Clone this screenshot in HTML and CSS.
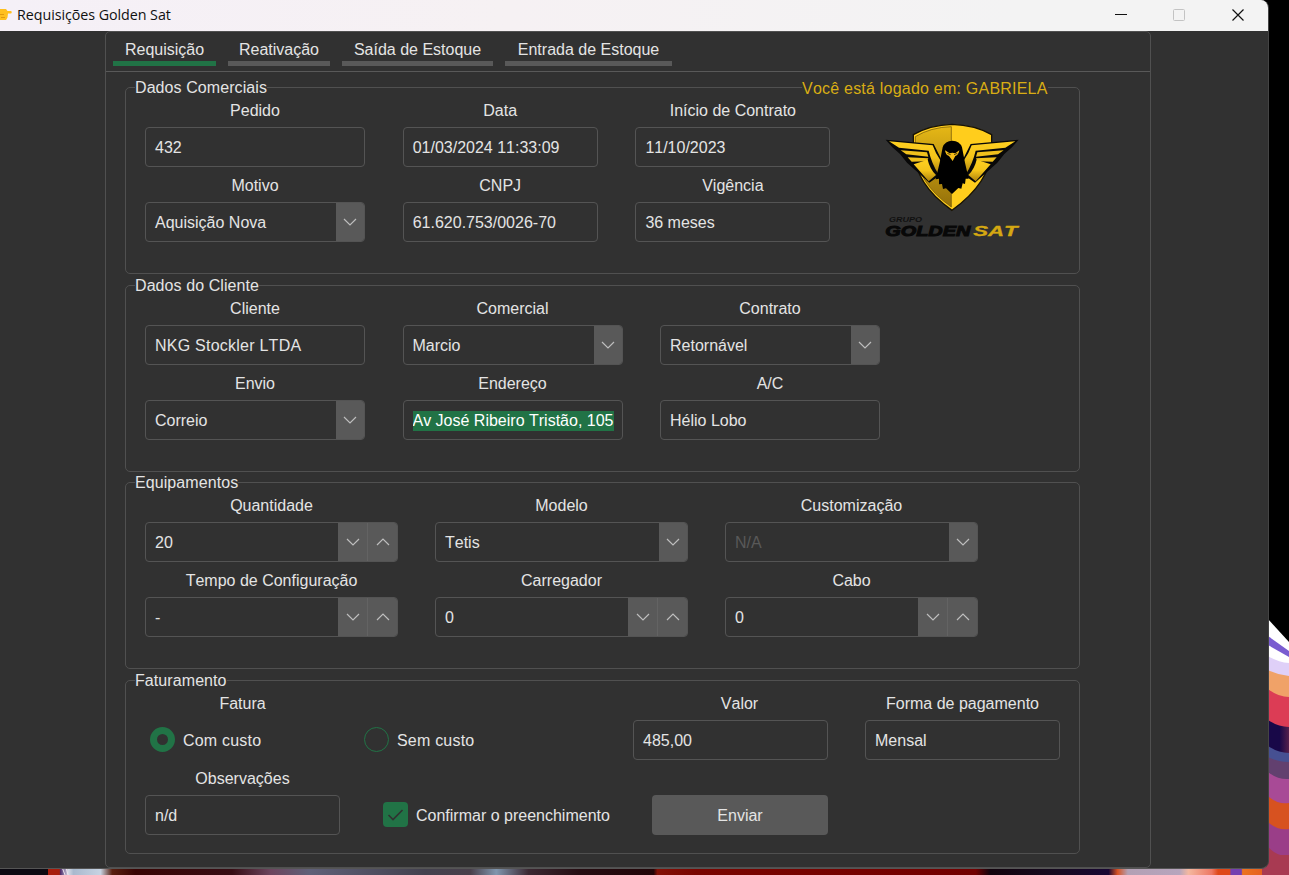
FILE: index.html
```html
<!DOCTYPE html>
<html lang="pt-BR">
<head>
<meta charset="utf-8">
<title>Requisições Golden Sat</title>
<link rel="stylesheet" href="styles.css">
</head>
<body>
<svg width="0" height="0" class="defs">
  <symbol id="down" viewBox="0 0 14 8"><path d="M1 1l6 6 6-6" fill="none" stroke="#bdbdbd" stroke-width="1.2"/></symbol>
  <symbol id="up" viewBox="0 0 14 8"><path d="M1 7l6-6 6 6" fill="none" stroke="#bdbdbd" stroke-width="1.2"/></symbol>
</svg>
<div class="desktop">
  <svg class="wallpaper wallpaper-right" viewBox="0 0 49 275" width="49" height="275">
    <defs><linearGradient id="w1" x1="0" x2="1"><stop offset=".55" stop-color="#180848"/><stop offset="1" stop-color="#54204c"/></linearGradient></defs>
    <path fill="#a83a52" d="M10 240H49V275H10z"/>
    <path fill="#9a3e88" d="M28 215H49V256Q38 257 28 247z"/>
    <path fill="#d75220" d="M28 190H49V229Q38 231 28 222z"/>
    <path fill="#a84a96" d="M28 165H49V203Q38 205 28 196z"/>
    <path fill="#62406f" d="M28 150H49V179Q38 180 28 172z"/>
    <path fill="#465092" d="M28 140H49V162Q38 162 28 157z"/>
    <path fill="url(#w1)" d="M28 115H49V153Q38 153 28 146z"/>
    <path fill="#dc3c55" d="M28 80H49V127Q38 127 28 120z"/>
    <path fill="#f0a268" d="M28 65H49V97Q38 97 28 89z"/>
    <path fill="#dfd0f8" d="M28 50L49 60V76Q38 75 28 70z"/>
    <path fill="#fff" d="M28 19L49 42V63Q38 62 28 56z"/>
    <path fill="#7a5cd0" d="M28 36L49 51V57L28 45z"/>
  </svg>
  <svg class="wallpaper wallpaper-bottom" viewBox="0 0 1289 20" width="1289" height="20">
    <defs>
      <linearGradient id="w2" gradientUnits="userSpaceOnUse" x1="0" x2="1289" y1="0" y2="0">
        <stop offset="0" stop-color="#0c0a12"/><stop offset=".037" stop-color="#0c0a12"/>
        <stop offset=".0375" stop-color="#a81d0c"/><stop offset=".046" stop-color="#a81d0c"/>
        <stop offset=".047" stop-color="#503070"/><stop offset=".053" stop-color="#d5d9e4"/>
        <stop offset=".057" stop-color="#a9b9ce"/><stop offset=".078" stop-color="#c7d3e2"/>
        <stop offset=".087" stop-color="#582010"/><stop offset=".105" stop-color="#380403"/>
        <stop offset=".18" stop-color="#370d14"/><stop offset=".21" stop-color="#6c455e"/>
        <stop offset=".24" stop-color="#5f6078"/><stop offset=".33" stop-color="#43414e"/>
        <stop offset=".365" stop-color="#49404b"/><stop offset=".385" stop-color="#8096ae"/>
        <stop offset=".41" stop-color="#3b2832"/><stop offset=".45" stop-color="#250d12"/>
        <stop offset=".507" stop-color="#220508"/><stop offset=".51" stop-color="#831006"/>
        <stop offset=".54" stop-color="#790500"/><stop offset=".757" stop-color="#720000"/>
        <stop offset=".768" stop-color="#12030d"/><stop offset=".82" stop-color="#160a20"/>
        <stop offset=".86" stop-color="#180632"/><stop offset=".867" stop-color="#d85222"/>
        <stop offset=".875" stop-color="#b3a0b4"/><stop offset=".915" stop-color="#b7a5bd"/>
        <stop offset=".922" stop-color="#f4b8a0"/><stop offset=".94" stop-color="#ed7864"/>
        <stop offset=".945" stop-color="#df4819"/><stop offset=".954" stop-color="#df4819"/>
        <stop offset=".955" stop-color="#7440b0"/><stop offset=".963" stop-color="#7440b0"/>
        <stop offset=".964" stop-color="#ec7320"/><stop offset=".99" stop-color="#e05420"/>
        <stop offset="1" stop-color="#a83a52"/>
      </linearGradient>
    </defs>
    <path fill="url(#w2)" d="M0 0H1262V20H0z"/>
    <path fill="#a83a52" d="M1255 8L1268 0H1289V20H1275z"/>
    <path stroke="#efe4ee" d="M62 12l3 8M66 12l2 8"/>
  </svg>

  <div class="window">
    <header class="titlebar">
      <svg class="hand" width="12" height="14" viewBox="0 0 12 14"><path fill="#ffc01e" d="M0 1h6l1.500 2H10.500a1.200 1.200 0 0 1 0 2.500H8l-.5 4-1.500 2.500H0z"/><path stroke="#e09a10" fill="none" d="M0 6.500h4M1 9.500h4"/></svg>
      <span class="title">Requisições Golden Sat</span>
      <svg class="controls" width="130" height="14" viewBox="0 0 130 14">
        <path stroke="#111" stroke-width="1.200" fill="none" d="M0 6.500h12M117.500 1.500l11 11M128.500 1.500l-11 11"/>
        <rect x="58.500" y="1.500" width="11" height="11" rx="1" fill="none" stroke="#c3c3c3"/>
      </svg>
    </header>
    <main class="notebook">
      <nav class="tabs">
        <div class="tab active">Requisição</div>
        <div class="tab">Reativação</div>
        <div class="tab wide">Saída de Estoque</div>
        <div class="tab widest">Entrada de Estoque</div>
      </nav>
      <div class="groups">
        <section class="group">
          <span class="legend">Dados Comerciais</span>
          <span class="login">Você está logado em: GABRIELA</span>
          <div class="fields commercial">
            <div class="cell"><label>Pedido</label><div class="field">432</div></div>
            <div class="cell"><label>Data</label><div class="field">01/03/2024 11:33:09</div></div>
            <div class="cell"><label>Início de Contrato</label><div class="field">11/10/2023</div></div>
            <div class="cell"><label>Motivo</label><div class="field">Aquisição Nova<i class="btn"><svg><use href="#down"/></svg></i></div></div>
            <div class="cell"><label>CNPJ</label><div class="field">61.620.753/0026-70</div></div>
            <div class="cell"><label>Vigência</label><div class="field">36 meses</div></div>
          </div>
          <svg class="logo" width="155" height="135" viewBox="0 0 465 405">
            <defs>
              <linearGradient id="g1" x1="0" y1="0" x2="0" y2="1"><stop offset="0" stop-color="#e5b716"/><stop offset="1" stop-color="#94700a"/></linearGradient>
              <linearGradient id="g2" x1="0" y1="0" x2="0" y2="1"><stop offset="0" stop-color="#ffd020"/><stop offset=".5" stop-color="#f4c41a"/><stop offset="1" stop-color="#ac820c"/></linearGradient>
              <g id="wing">
                <path fill="#080808" d="M32 89L176 102 200 150 196 195 163 218 96 158 75 132 52 112z"/>
                <path fill="url(#g2)" d="M42 94L173 106Q182 132 197 152L190 192Q170 160 161 122L72 113z"/>
                <path fill="#f0c01c" d="M77 121L156 127 160 140 94 133zM98 142L160 145 156 154 110 155z"/>
                <path fill="url(#g2)" d="M116 163L158 149Q165 178 183 195L161 214z"/>
              </g>
            </defs>
            <path fill="#ffcd1c" stroke="#171204" stroke-width="4" d="M115 74Q165 45 231 43 300 45 350 74V118Q346 218 231 301 120 224 115 118z"/>
            <path fill="url(#g1)" stroke="#684e08" stroke-width="2" d="M121 80Q166 52 229 50V291Q126 219 121 118z"/>
            <use href="#wing"/><use href="#wing" transform="matrix(-1 0 0 1 463 0)"/>
            <path fill="#000" d="M203 112Q210 92 232 92 254 92 261 112L270 158 281 206 272 206 270 222 263 220 259 236 250 234 231 252 213 235 204 237 201 222 192 223 192 206 182 208 194 158z"/>
            <path fill="#f5bd18" d="M210 121L224 130 232 128 241 130 253 121Q251 135 241 138L233 153 222 138Q212 136 210 121z"/>
            <path stroke="#0b0903" stroke-width="2" d="M217 130l10 4M247 130l-10 4"/>
            <g class="brand">
              <text x="42" y="336" font-size="20" textLength="99" lengthAdjust="spacingAndGlyphs" fill="#101010">GRUPO</text>
              <text x="31" y="378" font-size="45" stroke="#080808" stroke-width="3" textLength="255" lengthAdjust="spacingAndGlyphs" fill="#080808">GOLDEN</text>
              <text x="295" y="378" font-size="45" stroke="#d5a812" stroke-width="1" textLength="133" lengthAdjust="spacingAndGlyphs" fill="#d5a812">SAT</text>
            </g>
          </svg>
        </section>

        <section class="group">
          <span class="legend">Dados do Cliente</span>
          <div class="fields client">
            <div class="cell"><label>Cliente</label><div class="field company">NKG Stockler LTDA</div></div>
            <div class="cell"><label>Comercial</label><div class="field">Marcio<i class="btn"><svg><use href="#down"/></svg></i></div></div>
            <div class="cell"><label>Contrato</label><div class="field">Retornável<i class="btn"><svg><use href="#down"/></svg></i></div></div>
            <div class="cell"><label>Envio</label><div class="field">Correio<i class="btn"><svg><use href="#down"/></svg></i></div></div>
            <div class="cell"><label>Endereço</label><div class="field"><span class="selected">Av José Ribeiro Tristão, 105</span></div></div>
            <div class="cell"><label>A/C</label><div class="field">Hélio Lobo</div></div>
          </div>
        </section>

        <section class="group">
          <span class="legend">Equipamentos</span>
          <div class="fields equipment">
            <div class="cell"><label>Quantidade</label><div class="field">20<i class="btn spin"><svg><use href="#down"/></svg><svg><use href="#up"/></svg></i></div></div>
            <div class="cell"><label>Modelo</label><div class="field">Tetis<i class="btn"><svg><use href="#down"/></svg></i></div></div>
            <div class="cell"><label>Customização</label><div class="field disabled">N/A<i class="btn"><svg><use href="#down"/></svg></i></div></div>
            <div class="cell"><label>Tempo de Configuração</label><div class="field">-<i class="btn spin"><svg><use href="#down"/></svg><svg><use href="#up"/></svg></i></div></div>
            <div class="cell"><label>Carregador</label><div class="field">0<i class="btn spin"><svg><use href="#down"/></svg><svg><use href="#up"/></svg></i></div></div>
            <div class="cell"><label>Cabo</label><div class="field">0<i class="btn spin"><svg><use href="#down"/></svg><svg><use href="#up"/></svg></i></div></div>
          </div>
        </section>

        <section class="group last">
          <span class="legend">Faturamento</span>
          <div class="billing">
            <div class="row">
              <div class="cell narrow"><label>Fatura</label><div class="choice"><i class="radio on"></i><span>Com custo</span></div></div>
              <div class="choice second"><i class="radio"></i><span>Sem custo</span></div>
              <div class="cell narrow value"><label>Valor</label><div class="field">485,00</div></div>
              <div class="cell narrow payment"><label>Forma de pagamento</label><div class="field">Mensal</div></div>
            </div>
            <div class="row">
              <div class="cell narrow"><label>Observações</label><div class="field">n/d</div></div>
              <div class="choice confirm"><svg class="check" width="25" height="25" viewBox="0 0 25 25"><rect width="25" height="25" rx="4" fill="#217346"/><path d="M5.500 13l4.500 4.500L19.500 8" fill="none" stroke="#313131" stroke-width="1.600"/></svg><span>Confirmar o preenchimento</span></div>
              <div class="send">Enviar</div>
            </div>
          </div>
        </section>
      </div>
    </main>
  </div>
</div>
</body>
</html>
```
FILE: styles.css
```css
* { box-sizing: border-box; }
body {
  margin: 0;
  background: #000;
  color: #e4e4e4;
  font: 16px/22px "Liberation Sans", Arial, sans-serif;
  font-kerning: none;
}
.defs { position: absolute; }
.desktop { position: relative; width: 1289px; height: 875px; overflow: hidden; }
.wallpaper { position: absolute; }
.wallpaper-right { left: 1240px; top: 600px; }
.wallpaper-bottom { left: 0; top: 855px; }

.window {
  position: relative;
  width: 1269px;
  height: 869px;
  overflow: hidden;
  background: #313131;
  border-right: 1px solid #444;
  border-bottom: 1px solid #555;
  border-radius: 0 8px 8px 0;
}
.titlebar {
  display: flex;
  align-items: center;
  height: 31px;
  padding-bottom: 2px;
  background: linear-gradient(90deg, #f5f0f7, #f6f1f3 40%, #f3f3f3 80%);
  color: #111;
}
.title {
  margin-left: 5px;
  font: 14.300px/20px "Open Sans", "Noto Sans", sans-serif;
  letter-spacing: -0.060px;
}
.controls { margin-left: auto; margin-right: 23px; }

.notebook {
  width: 1046px;
  height: 837px;
  margin-left: 105px;
  border: 1px solid #505050;
  border-radius: 5px;
}
.tabs {
  display: flex;
  gap: 12px;
  height: 40px;
  padding: 7px 0 0 7px;
  border-bottom: 1px solid #595959;
}
.tab {
  width: 102px;
  height: 27px;
  border-bottom: 5px solid #595959;
  text-align: center;
}
.tab.active { width: 103px; border-color: #217346; }
.tab.wide { width: 151px; }
.tab.widest { width: 167px; }

.groups { display: flex; flex-direction: column; gap: 10.600px; padding: 15px 0 0 19px; }
.group {
  position: relative;
  display: flex;
  width: 955px;
  height: 187px;
  padding: 12px 0 0 19px;
  border: 1px solid #505050;
  border-radius: 5px;
}
.group.last { height: 174.500px; }
.legend, .login {
  position: absolute;
  top: -11px;
  left: 9px;
  background: #313131;
  letter-spacing: 0.080px;
}
.login { top: -10px; left: 676px; color: #d9ad14; letter-spacing: 0.220px; }

.fields { display: grid; grid-auto-rows: 67px; row-gap: 8px; column-gap: 38px; align-content: start; }
.commercial { grid-template-columns: 220px 195px 195px; column-gap: 37.700px; }
.client { grid-template-columns: 220px 220px 220px; column-gap: 37.500px; }
.equipment { grid-template-columns: 253px 253px 253px; column-gap: 37px; }
.cell { display: flex; flex-direction: column; gap: 5px; height: 67px; }
.cell label { text-align: center; }
.field {
  display: flex;
  align-items: center;
  height: 40px;
  padding: 2px 0 0 9px;
  overflow: hidden;
  border: 1px solid #545454;
  border-radius: 4px;
  white-space: nowrap;
}
.company { letter-spacing: 0.240px; }
.disabled { color: #595959; }
.btn {
  display: flex;
  align-items: center;
  justify-content: center;
  width: 28px;
  height: 40px;
  margin-left: auto;
  background: #595959;
}
.btn svg { width: 14px; height: 8px; margin-top: -2px; }
.spin { width: 59px; gap: 16px; background: linear-gradient(90deg, #595959 29px, #636363 29px, #636363 30px, #595959 30px); }
.selected { background: #217346; color: #fff; line-height: 20px; width: 201px; overflow: hidden; }
.logo { flex: none; margin: 10px 0 0 45px; }
.brand { font-family: "Liberation Sans", Arial, sans-serif; font-weight: bold; font-style: italic; }

.billing { display: flex; flex-direction: column; gap: 8px; }
.row { display: flex; align-items: flex-end; height: 67px; }
.narrow { width: 195px; }
.choice { display: flex; align-items: center; gap: 8px; height: 40px; }
.choice span { padding-top: 2px; letter-spacing: 0.200px; }
.cell .choice { margin-left: 5px; }
.radio { width: 25px; height: 25px; border: 1px solid #217346; border-radius: 50%; }
.radio.on { border-width: 7.500px; }
.second { margin-left: 24px; width: 221px; }
.value { margin-left: 48px; }
.value label { padding-left: 18px; }
.payment { margin-left: 37px; }
.confirm { margin-left: 43px; width: 269px; }
.confirm span { letter-spacing: 0; }
.send {
  width: 176px;
  height: 40px;
  padding-top: 1px;
  background: #595959;
  border-radius: 4px;
  line-height: 40px;
  text-align: center;
}
```
